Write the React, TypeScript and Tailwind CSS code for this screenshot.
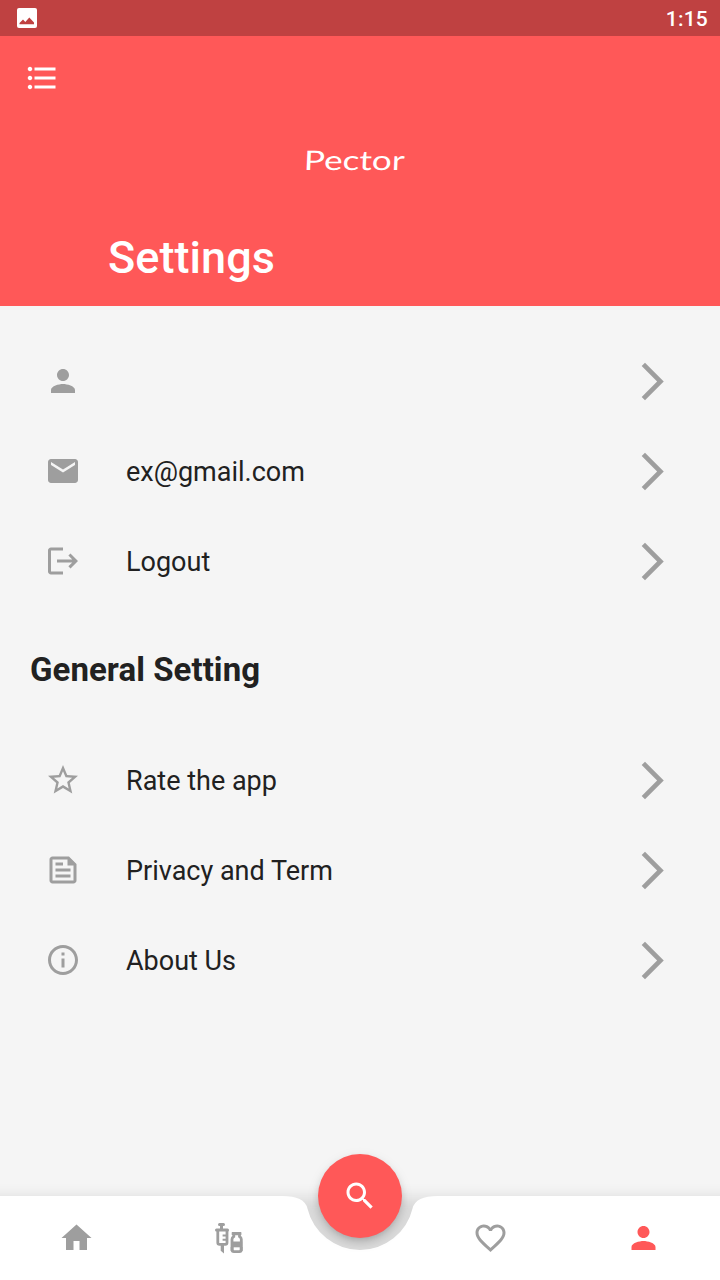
import React from "react";

const paths = {
  list: "M4 10.5c-.83 0-1.5.67-1.5 1.5s.67 1.5 1.5 1.5 1.5-.67 1.5-1.5-.67-1.5-1.5-1.5zm0-6c-.83 0-1.5.67-1.5 1.5S3.17 7.5 4 7.5 5.5 6.83 5.5 6 4.83 4.5 4 4.5zm0 12c-.83 0-1.5.68-1.5 1.5s.68 1.5 1.5 1.5 1.5-.68 1.5-1.5-.67-1.5-1.5-1.5zM7 19h14v-2H7v2zm0-6h14v-2H7v2zm0-8v2h14V5H7z",
  person: "M12 12c2.21 0 4-1.79 4-4s-1.79-4-4-4-4 1.79-4 4 1.79 4 4 4zm0 2c-2.67 0-8 1.34-8 4v2h16v-2c0-2.66-5.33-4-8-4z",
  mail: "M20 4H4c-1.1 0-1.99.9-1.99 2L2 18c0 1.1.9 2 2 2h16c1.1 0 2-.9 2-2V6c0-1.1-.9-2-2-2zm0 4l-8 5-8-5V6l8 5 8-5v2z",
  logout: "M17 7l-1.41 1.41L18.17 11H8v2h10.17l-2.58 2.58L17 17l5-5zM4 5h8V3H4c-1.1 0-2 .9-2 2v14c0 1.1.9 2 2 2h8v-2H4V5z",
  star: "M22 9.24l-7.19-.62L12 2 9.19 8.63 2 9.24l5.46 4.73L5.82 21 12 17.27 18.18 21l-1.63-7.03L22 9.24zM12 15.4l-3.76 2.27 1-4.28-3.32-2.88 4.38-.38L12 6.1l1.71 4.04 4.38.38-3.32 2.88 1 4.28L12 15.4z",
  feed: "M16 3H5c-1.1 0-2 .9-2 2v14c0 1.1.9 2 2 2h14c1.1 0 2-.9 2-2V8l-5-5zm3 16H5V5h10v4h4v10zM7 17h10v-2H7v2zm5-10H7v2h5V7zm-5 6h10v-2H7v2z",
  info: "M11 7h2v2h-2zm0 4h2v6h-2zm1-9C6.48 2 2 6.48 2 12s4.48 10 10 10 10-4.48 10-10S17.52 2 12 2zm0 18c-4.41 0-8-3.59-8-8s3.59-8 8-8 8 3.59 8 8-3.59 8-8 8z",
  chevron: "M6.23 20.23L8 22l10-10L8 2 6.23 3.77 14.46 12z",
  home: "M10 20v-6h4v6h5v-8h3L12 3 2 12h3v8z",
  heart: "M16.5 3c-1.74 0-3.41.81-4.5 2.09C10.91 3.81 9.24 3 7.5 3 4.42 3 2 5.42 2 8.5c0 3.78 3.4 6.86 8.55 11.54L12 21.35l1.45-1.32C18.6 15.36 22 12.28 22 8.5 22 5.42 19.58 3 16.5 3zm-4.4 15.55l-.1.1-.1-.1C7.14 14.24 4 11.39 4 8.5 4 6.5 5.5 5 7.5 5c1.54 0 3.04.99 3.57 2.36h1.87C13.46 5.99 14.96 5 16.5 5c2 0 3.5 1.5 3.5 3.5 0 2.89-3.14 5.74-7.9 10.05z",
  search: "M15.5 14h-.79l-.28-.27C15.41 12.59 16 11.11 16 9.5 16 5.91 13.09 3 9.5 3S3 5.91 3 9.5 5.91 16 9.5 16c1.61 0 3.09-.59 4.23-1.57l.27.28v.79l5 4.99L20.49 19l-4.99-5zm-6 0C7.01 14 5 11.99 5 9.5S7.01 5 9.5 5 14 7.01 14 9.5 11.99 14 9.5 14z",
};

type IconName = keyof typeof paths;

function Icon({ name, className = "size-9" }: { name: IconName; className?: string }) {
  return (
    <svg viewBox="0 0 24 24" fill="currentColor" className={className}>
      <path d={paths[name]} />
    </svg>
  );
}

function NavIcon({ name }: { name: IconName }) {
  return (
    <svg viewBox="0 0 24 24" fill="currentColor" className="size-9">
      <path d={paths[name]} transform="translate(-0.33 0)" />
    </svg>
  );
}

function Vaccine() {
  return (
    <svg viewBox="0 0 36 36" fill="none" stroke="currentColor" className="size-9">
      <path d="M7.5 4.5H11.5M9.5 5V9M4.5 10H15.5" strokeWidth="3" strokeLinecap="round" />
      <path d="M5.8 10V22.5Q5.8 24.4 7.5 24.4H13.3Q15 24.4 15 22.5V10" strokeWidth="2.8" />
      <path d="M14.5 15.4H10.6M14.5 19.8H10.6" strokeWidth="2" />
      <path d="M8.7 24H12V33.4L8.7 30.7Z" fill="currentColor" stroke="none" />
      <path d="M20.3 12.6H28.8V14.6H20.3Z" fill="currentColor" strokeWidth="1.2" strokeLinejoin="round" />
      <path d="M21.8 14.5V16.5Q20 17.5 20 19.3V29.5Q20 31.7 22 31.7H27.3Q29.3 31.7 29.3 29.5V19.3Q29.3 17.5 27.5 16.5V14.5" strokeWidth="2.8" />
      <path d="M19 21.5H30.2V27.3H19Z" fill="currentColor" stroke="none" />
      <path d="M18.7 29H21.5M27.8 29H30.6" strokeWidth="4" />
    </svg>
  );
}

function Row({ icon, label }: { icon: IconName; label: string }) {
  return (
    <button className="flex h-[90px] w-full items-center px-[45px] text-left text-[#9e9e9e]">
      <Icon name={icon} />
      <span className="ml-[45px] flex-1 pt-0.5 text-[27px] leading-9 text-[#212121]">{label}</span>
      <Icon name="chevron" className="size-[45px]" />
    </button>
  );
}

export default function App() {
  return (
    <div className="relative flex h-[1280px] w-[720px] flex-col overflow-hidden bg-[#f5f5f5] font-['Roboto',sans-serif]">
      <div className="flex h-9 shrink-0 items-center justify-between bg-[#bf4141] pl-[17px] pr-3 text-white">
        <svg viewBox="0 0 20 20" className="size-5">
          <rect width="20" height="20" rx="2" fill="white" />
          <path d="M2.5 16.2V15L6 11.5L8.3 14L12.3 9.5L17 14.5V16.2Z" fill="#bf4141" />
        </svg>
        <span className="pt-0.5 text-[21px] font-medium leading-9 tracking-[0.2px]">1:15</span>
      </div>
      <header className="flex h-[270px] shrink-0 flex-col bg-[#ff5858] text-white">
        <div className="flex h-[84px] items-center pl-6">
          <Icon name="list" />
        </div>
        <div className="flex h-[82px] items-center pb-0.5 pl-[304px]">
          <span className="origin-left -skew-x-2 scale-x-[1.3] font-['Lato',cursive] text-[27px] font-normal leading-8">Pector</span>
        </div>
        <h1 className="pl-[108px] pt-[29px] text-[45px] font-medium leading-[54px] tracking-[0.06px]">Settings</h1>
      </header>
      <main className="flex flex-1 flex-col pt-[30px]">
        <Row icon="person" label="" />
        <Row icon="mail" label="ex@gmail.com" />
        <Row icon="logout" label="Logout" />
        <h2 className="flex h-[129px] items-center pb-0.5 pl-[30px] text-[33px] font-bold leading-10 tracking-[0.05px] text-[#212121]">General Setting</h2>
        <Row icon="star" label="Rate the app" />
        <Row icon="feed" label="Privacy and Term" />
        <Row icon="info" label="About Us" />
      </main>
      <nav className="absolute inset-x-0 bottom-0 h-[84px] text-[#9e9e9e]">
        <svg viewBox="0 -30 720 114" className="absolute bottom-0 left-0 h-[114px] w-[720px]">
          <defs>
            <filter id="soft" x="-10%" y="-40%" width="120%" height="180%">
              <feGaussianBlur stdDeviation="7" />
            </filter>
          </defs>
          <path d="M-40 1H760V100H-40Z" fill="#000" fillOpacity=".11" filter="url(#soft)" />
          <path d="M0 0H282Q304.5 0 307.46 12.47A54 54 0 0 0 412.54 12.47Q415.5 0 438 0H720V84H0Z" fill="white" />
        </svg>
        <div className="relative grid h-full grid-cols-[153px_153px_108px_153px_153px] place-items-center">
          <button><NavIcon name="home" /></button>
          <button><Vaccine /></button>
          <span />
          <button><NavIcon name="heart" /></button>
          <button className="text-[#ff5858]"><NavIcon name="person" /></button>
        </div>
        <button className="absolute left-[318px] -top-[42px] flex size-[84px] items-center justify-center rounded-full bg-[#ff5858] text-white shadow-[0_4px_8px_-2px_rgba(0,0,0,0.22),0_4px_14px_rgba(0,0,0,0.08)]">
          <Icon name="search" />
        </button>
      </nav>
    </div>
  );
}
